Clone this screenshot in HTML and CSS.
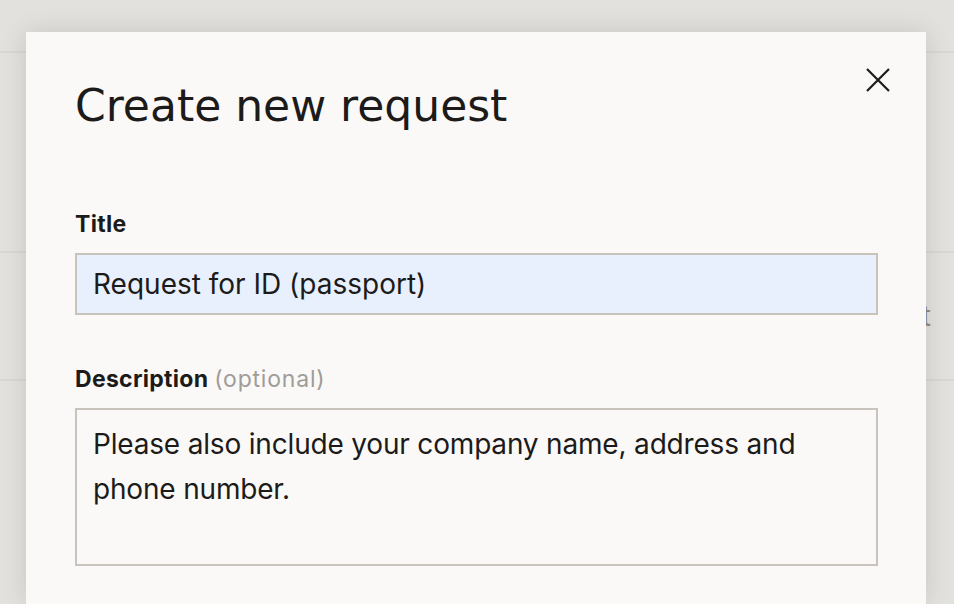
FILE: index.html
```html
<!DOCTYPE html>
<html lang="en">
<head>
  <meta charset="UTF-8" />
  <meta name="viewport" content="width=device-width, initial-scale=1.0"/>
  <title>Create new request</title>
  <link rel="stylesheet" href="styles.css">
</head>
<body>
  <div class="page">
    <div class="page-row top"></div>
    <div class="page-row tall"></div>
    <div class="page-row mid"><span class="page-text">Request</span></div>
  </div>

  <div class="modal">
    <button class="close-btn" aria-label="Close">
      <svg width="26" height="26" viewBox="0 0 26 26">
        <path d="M2 2 L24 24 M24 2 L2 24" stroke="#1c1b1a" stroke-width="2.2" fill="none"/>
      </svg>
    </button>
    <h1>Create new request</h1>

    <div class="field">
      <label class="label">Title</label>
      <div class="input">Request for ID (passport)</div>
    </div>

    <div class="field">
      <label class="label">Description <span class="hint">(optional)</span></label>
      <div class="textarea">Please also include your company name, address and<br>phone number.</div>
    </div>
  </div>
</body>
</html>
```

FILE: styles.css
```css
body {
  margin: 0;
  background: #e3e1dd;
  font-family: Inter, Roboto, "Liberation Sans", sans-serif;
  color: #1c1b1a;
  overflow: hidden;
  height: 604px;
}
.page {
  display: flex;
  flex-direction: column;
}
.page-row {
  border-bottom: 2px solid #d9d7d3;
}
.page-row.top {
  height: 51px;
}
.page-row.tall {
  height: 198px;
}
.page-row.mid {
  height: 126px;
  display: flex;
  justify-content: flex-end;
  align-items: center;
  padding-right: 23px;
}
.page-text {
  color: #8e8b87;
  font-size: 28px;
}
.modal {
  position: absolute;
  top: 32px;
  left: 26px;
  width: 900px;
  height: 572px;
  background: #faf9f7;
  box-shadow: 0 0 24px rgba(0, 0, 0, 0.12);
  box-sizing: border-box;
  padding: 0 48px 0 49px;
}
.close-btn {
  position: absolute;
  top: 35px;
  right: 35px;
  background: none;
  border: none;
  padding: 0;
  cursor: pointer;
}
.close-btn svg {
  display: block;
}
h1 {
  margin: 0;
  padding-top: 46px;
  font-family: "DejaVu Sans", sans-serif;
  font-weight: normal;
  font-size: 44px;
  line-height: 56px;
}
.label {
  display: block;
  font-weight: bold;
  font-size: 23px;
  line-height: 28px;
  letter-spacing: 0.3px;
}
.field:first-of-type .label {
  margin-top: 76px;
}
.field + .field .label {
  margin-top: 50px;
}
.hint {
  font-weight: normal;
  color: #a09c97;
  letter-spacing: 0.8px;
}
.input {
  margin-top: 15px;
  height: 62px;
  box-sizing: border-box;
  border: 2px solid #c8c3bd;
  background: #e8f0fe;
  padding: 0 16px;
  font-size: 28px;
  line-height: 58px;
}
.textarea {
  margin-top: 15px;
  height: 158px;
  box-sizing: border-box;
  border: 2px solid #c8c3bd;
  background: #faf9f7;
  padding: 12px 16px;
  font-size: 28px;
  line-height: 45px;
  letter-spacing: -0.18px;
}
```
